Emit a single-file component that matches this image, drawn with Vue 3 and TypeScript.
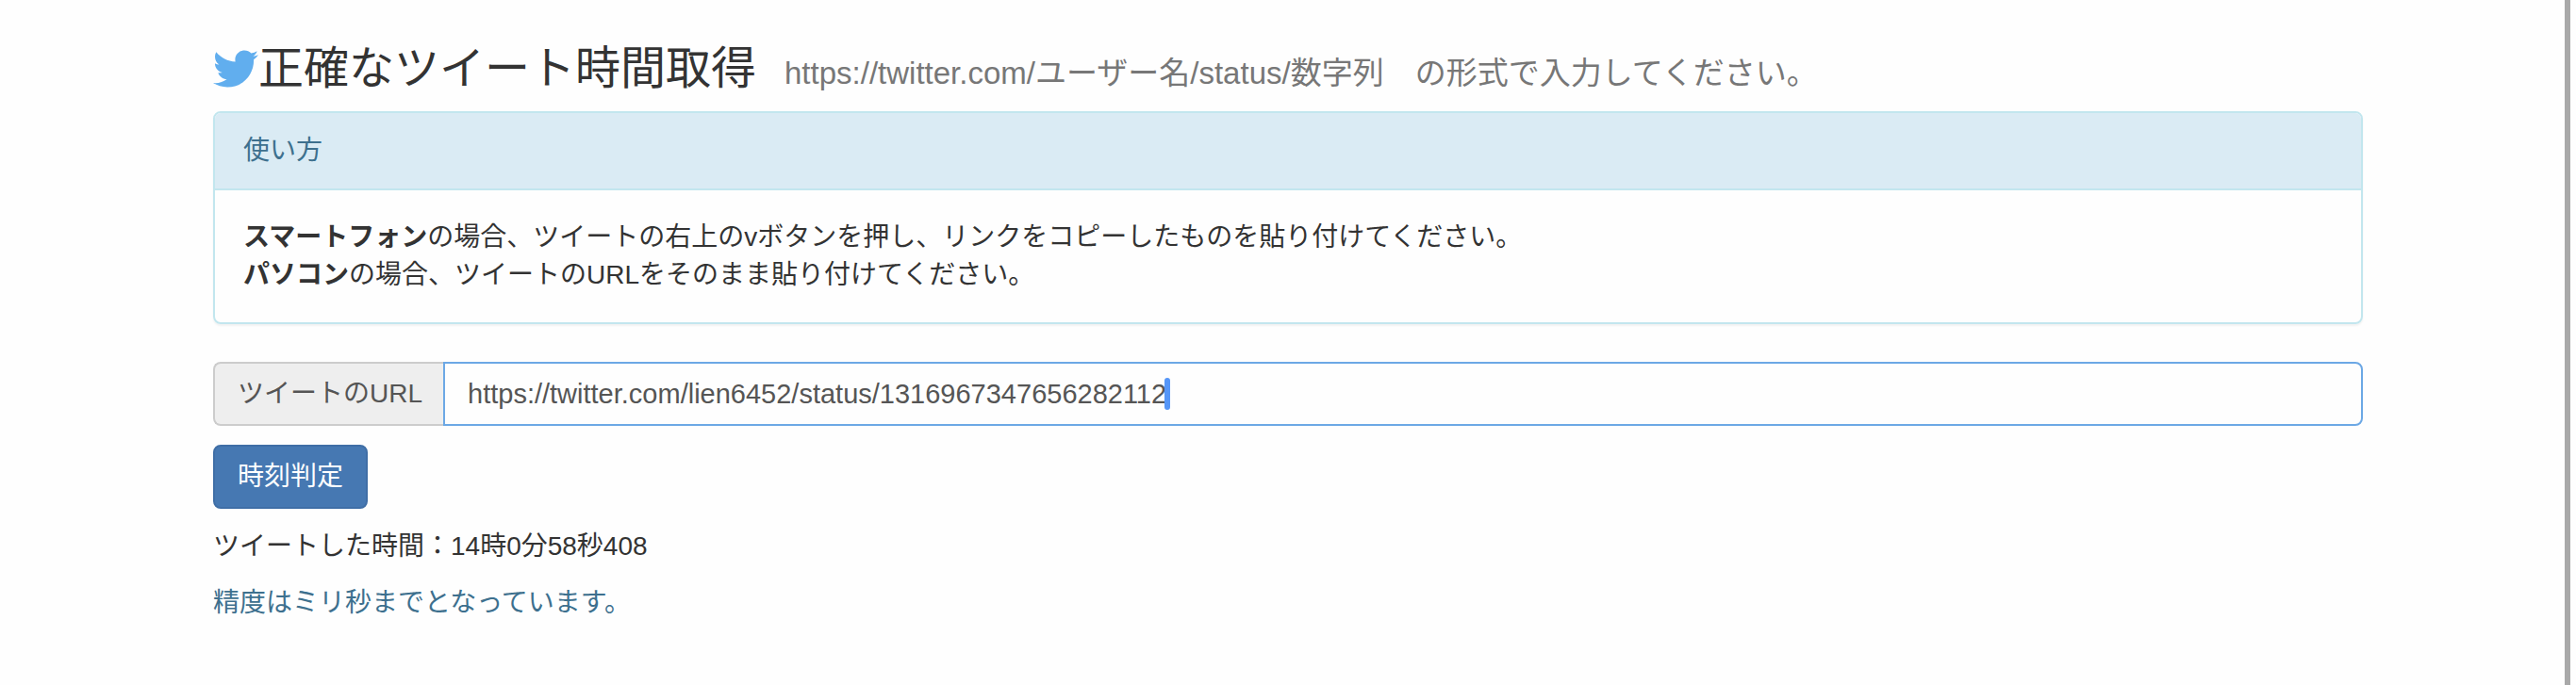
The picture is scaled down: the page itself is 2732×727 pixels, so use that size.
<script setup lang="ts">
import { computed, ref } from 'vue'

const TWITTER_EPOCH = 1288834974657n
const url = ref<string>('https://twitter.com/lien6452/status/1316967347656282112')
const submitted = ref<string>(url.value)

// Tweet ids carry their creation time in milliseconds above the low 22 bits.
const time = computed<string>(() => {
  const match = submitted.value.match(/status\/(\d+)/)
  if (!match) return ''
  const millis = Number((BigInt(match[1]) >> BigInt(22)) + TWITTER_EPOCH)
  const d = new Date(millis + 9 * 3600 * 1000)
  return `${d.getUTCHours()}時${d.getUTCMinutes()}分${d.getUTCSeconds()}秒${d.getUTCMilliseconds()}`
})

function judge(): void {
  submitted.value = url.value
}
</script>

<template>
  <div class="page">
    <main class="container">
      <h3 class="title">
        <svg class="bird" viewBox="0 0 512 512" aria-hidden="true">
          <path
            d="M459.37 151.716c.325 4.548.325 9.097.325 13.645 0 138.72-105.583 298.558-298.558 298.558-59.452 0-114.68-17.219-161.137-47.106 8.447.974 16.568 1.299 25.34 1.299 49.055 0 94.213-16.568 130.274-44.832-46.132-.975-84.792-31.188-98.112-72.772 6.498.974 12.995 1.624 19.818 1.624 9.421 0 18.843-1.3 27.614-3.573-48.081-9.747-84.143-51.98-84.143-102.985v-1.299c13.969 7.797 30.214 12.67 47.431 13.319-28.264-18.843-46.781-51.005-46.781-87.391 0-19.492 5.197-37.36 14.294-52.954 51.655 63.675 129.3 105.258 216.365 109.807-1.624-7.797-2.599-15.918-2.599-24.04 0-57.828 46.782-104.934 104.934-104.934 30.213 0 57.502 12.67 76.67 33.137 23.715-4.548 46.456-13.32 66.599-25.34-7.798 24.366-24.366 44.833-46.132 57.827 21.117-2.273 41.584-8.122 60.426-16.243-14.292 20.791-32.161 39.308-52.628 54.253z"
          />
        </svg>
        <span>正確なツイート時間取得</span>
        <small>https://twitter.com/ユーザー名/status/数字列　の形式で入力してください。</small>
      </h3>

      <section class="panel">
        <div class="panel-heading">使い方</div>
        <div class="panel-body">
          <strong>スマートフォン</strong>の場合、ツイートの右上のvボタンを押し、リンクをコピーしたものを貼り付けてください。<br />
          <strong>パソコン</strong>の場合、ツイートのURLをそのまま貼り付けてください。
        </div>
      </section>

      <form @submit.prevent="judge">
        <div class="input-group">
          <label class="addon" for="tweet-url">ツイートのURL</label>
          <div class="control">
            <input id="tweet-url" v-model="url" type="text" autocomplete="off" spellcheck="false" />
            <span class="caret" aria-hidden="true"></span>
          </div>
        </div>
        <button class="submit" type="submit">時刻判定</button>
      </form>

      <p>ツイートした時間：{{ time }}</p>
      <p class="info">精度はミリ秒までとなっています。</p>
    </main>
    <div class="scrollbar" aria-hidden="true"></div>
  </div>
</template>

<style>
body {
  margin: 0;
  background: #fefefe;
}
</style>

<style scoped>
.page {
  position: relative;
  min-height: 100vh;
  box-sizing: border-box;
  padding: 46px 30px 0;
  font-family: "Liberation Sans", "Noto Sans CJK JP", sans-serif;
  font-size: 28px;
  font-weight: 400;
  line-height: 40px;
  color: #333;
}

.container {
  max-width: 2280px;
  margin: 0 auto;
}

.title {
  display: flex;
  align-items: baseline;
  margin: 0 0 18px;
  font-size: 48px;
  font-weight: 400;
  line-height: 54px;
}

.title small {
  margin-left: 30px;
  font-size: 33px;
  line-height: 36px;
  color: #777;
}

.bird {
  flex: none;
  align-self: center;
  width: 48px;
  height: 48px;
  fill: #61aeee;
}

.panel {
  margin-bottom: 40px;
  border: 2px solid #c2e6ee;
  border-radius: 8px;
  box-shadow: 0 2px 2px rgba(0, 0, 0, 0.05);
}

.panel-heading {
  padding: 20px 30px;
  border-bottom: 2px solid #c2e6ee;
  border-radius: 6px 6px 0 0;
  background: #daebf4;
  color: #3d708e;
}

.panel-body {
  padding: 30px;
}

strong {
  font-weight: 700;
}

.input-group {
  display: flex;
  margin-bottom: 20px;
}

.addon {
  padding: 12px 22px 12px 24px;
  border: 2px solid #ccc;
  border-right: 0;
  border-radius: 8px 0 0 8px;
  background: #eee;
  color: #555;
}

.control {
  display: flex;
  flex: 1;
  align-items: center;
  min-width: 0;
  padding: 0 24px;
  border: 2px solid #6ca8e5;
  border-radius: 0 8px 8px 0;
}

.control input {
  field-sizing: content;
  min-width: 0;
  padding: 0;
  border: 0;
  outline: 0;
  background: transparent;
  font: inherit;
  font-size: 29px;
  color: #555;
}

.caret {
  flex: none;
  width: 6px;
  height: 34px;
  margin-left: -2px;
  border-radius: 3px;
  background: #5596f8;
}

.submit {
  display: block;
  padding: 12px 24px;
  border: 2px solid #3f6ea6;
  border-radius: 8px;
  background: #4678b2;
  font: inherit;
  color: #fff;
  cursor: pointer;
}

p {
  margin: 20px 0 0;
}

.info {
  color: #3d708e;
}

.scrollbar {
  position: absolute;
  top: 0;
  right: 6px;
  bottom: 0;
  width: 6px;
  background: #a9a9a9;
}
</style>
